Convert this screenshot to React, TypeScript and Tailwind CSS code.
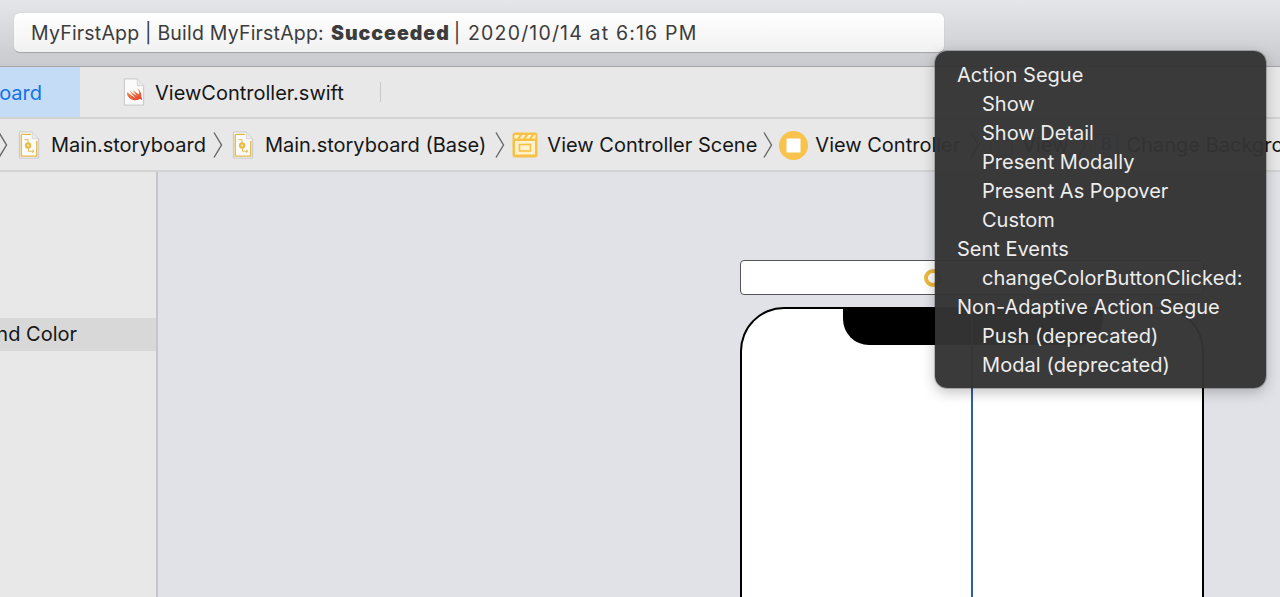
const font = { fontFamily: 'Inter, "Liberation Sans", sans-serif' };

function Chevron() {
  return (
    <svg width="10" height="28" viewBox="0 0 10 28" className="shrink-0" fill="none">
      <path d="M1 1.5 L8.5 14 L1 26.5" stroke="#666666" strokeWidth="1.4" />
    </svg>
  );
}

function DocBase({ children }: { children?: React.ReactNode }) {
  return (
    <svg width="22" height="28" viewBox="0 0 24 29" preserveAspectRatio="none" className="shrink-0" fill="none">
      <path d="M1.5 1 H15.5 L22.5 8 V28 H1.5 Z" fill="#fbfbfb" stroke="#c4c4c4" strokeWidth="1" />
      <path d="M15.5 1 V8 H22.5" fill="#e9e9e9" stroke="#d0d0d0" strokeWidth="0.8" />
      {children}
    </svg>
  );
}

function StoryboardIcon() {
  return (
    <DocBase>
      <path d="M3.5 3.5 H14 M3.5 3.5 V26 H20.5 V10" stroke="#e3b64a" strokeWidth="1.5" />
      <path d="M7 9 H11 V12 M11.5 18 V21 H17" stroke="#e3b64a" strokeWidth="1" />
      <circle cx="11" cy="15" r="3.4" fill="#e9bb45" />
      <circle cx="11" cy="15" r="1.1" fill="#fff3cf" />
      <path d="M15.5 19.5 L17.5 21 L15.5 22.5" stroke="#e3b64a" strokeWidth="1" />
    </DocBase>
  );
}

function SwiftIcon() {
  return (
    <DocBase>
      <defs>
        <linearGradient id="swiftGrad" x1="0.2" y1="0" x2="0.8" y2="1">
          <stop offset="0" stopColor="#f2984a" />
          <stop offset="1" stopColor="#e2402f" />
        </linearGradient>
      </defs>
      <path
        d="M4.5 14.5 C8 17.5 11.5 19.5 13.5 20.5 C10.5 17.5 8.5 15 6.5 12.5 C9.5 15 13 17.5 15 18.5 C13 16 11.5 14 10.5 12.5 C13.5 14.8 16.5 16.5 17.5 17 C18 14.5 17 12.5 15.5 11 C18.5 12.5 20.5 16 20 19.5 C20.7 20.7 20.8 22 20.5 23 C19.8 22 18.8 21.6 18 21.8 C15.5 23.5 11 23.5 8 21.5 C6.5 20.5 5.3 19 4.5 17.5 Z"
        fill="url(#swiftGrad)"
      />
    </DocBase>
  );
}

function SceneIcon() {
  return (
    <svg width="26" height="26" viewBox="0 0 26 26" className="shrink-0" fill="none">
      <rect x="0.5" y="0.5" width="25" height="25" rx="2.5" fill="#f8c145" />
      <path d="M2.5 3 H23.5 V6.5 H2.5 Z" fill="#fff2cd" />
      <path d="M5 7 L8 2.5 H10.5 L7.5 7 Z M11 7 L14 2.5 H16.5 L13.5 7 Z M17 7 L20 2.5 H22.5 L19.5 7 Z" fill="#f8c145" />
      <rect x="3" y="9" width="20" height="13.5" fill="#fff2cd" />
      <rect x="7.5" y="12.5" width="11" height="6.5" fill="#fff2cd" stroke="#f8c145" strokeWidth="1.6" />
    </svg>
  );
}

function ControllerIcon() {
  return (
    <svg width="29" height="29" viewBox="0 0 29 29" className="shrink-0">
      <circle cx="14.5" cy="14.5" r="14.5" fill="#f8c34c" />
      <rect x="7.5" y="7.5" width="14" height="14" rx="0.5" fill="#ffffff" />
    </svg>
  );
}

function ViewIcon() {
  return (
    <svg width="23" height="23" viewBox="0 0 23 23" className="shrink-0" fill="none">
      <rect x="1" y="1" width="21" height="21" fill="#f6f6f6" stroke="#9a9a9a" strokeWidth="1.2" />
      <path d="M8 1 V22 M15 1 V22" stroke="#9a9a9a" strokeWidth="1" />
    </svg>
  );
}

function ButtonIcon() {
  return (
    <div className="w-[23px] h-[23px] shrink-0 border border-[#9a9a9a] bg-[#f6f6f6] text-[#1273e6] text-[17px] font-semibold flex items-center justify-center">
      B
    </div>
  );
}

function Crumb({ icon, text, iconGap }: { icon: React.ReactNode; text: string; iconGap: string }) {
  return (
    <div className={`flex items-center shrink-0 ${iconGap}`}>
      {icon}
      <span>{text}</span>
    </div>
  );
}

const menu: { label: string; indent?: boolean; wide?: boolean }[] = [
  { label: "Action Segue" },
  { label: "Show", indent: true },
  { label: "Show Detail", indent: true },
  { label: "Present Modally", indent: true },
  { label: "Present As Popover", indent: true },
  { label: "Custom", indent: true },
  { label: "Sent Events" },
  { label: "changeColorButtonClicked:", indent: true, wide: true },
  { label: "Non-Adaptive Action Segue" },
  { label: "Push (deprecated)", indent: true, wide: true },
  { label: "Modal (deprecated)", indent: true, wide: true },
];

export default function App() {
  return (
    <div style={font} className="relative w-[1280px] h-[597px] overflow-hidden bg-[#e1e2e7] flex flex-col text-[20px] text-[#161616]">
      {/* Title bar */}
      <div className="h-[67px] shrink-0 border-b border-[#a6a6a6] bg-gradient-to-b from-[#e5e6e9] to-[#c9cacd] pt-[13px] pl-[14px]">
        <div className="w-[930px] h-[40px] rounded-[6px] bg-gradient-to-b from-[#ffffff] to-[#f1f1f1] border-b border-[#a9a9a9] flex items-center pl-[17px] pt-[2px] text-[#3c3c3c] text-[19.5px] whitespace-nowrap shadow-[0_0_1px_rgba(0,0,0,0.25)]">
          <span className="tracking-[0.2px]">MyFirstApp | Build MyFirstApp:</span>
          <b className="ml-[7px] font-black tracking-[1px]">Succeeded</b>
          <span className="ml-[4px] tracking-[1.17px]">| 2020/10/14 at 6:16 PM</span>
        </div>
      </div>

      {/* Tabs */}
      <div className="h-[52px] shrink-0 border-b-2 border-[#d3d3d3] bg-[#e8e8e8] flex items-stretch">
        <div className="w-[80px] bg-[#c5dcf6] text-[#1273e6] flex items-center justify-end whitespace-nowrap overflow-hidden pr-[38px] pt-[2px] shrink-0">
          <span className="shrink-0">oard</span>
        </div>
        <div className="flex items-center pl-[43px] gap-[10px]">
          <SwiftIcon />
          <span className="pt-[2px]">ViewController.swift</span>
          <span className="ml-[26px] w-[1px] h-[20px] bg-[#c9c9c9]" />
        </div>
      </div>

      {/* Jump bar */}
      <div className="h-[53px] shrink-0 border-b-2 border-[#d3d3d3] bg-[#e8e8e8] flex items-center whitespace-nowrap overflow-hidden pt-[1px]">
        <div className="ml-[-2px] mr-[10px]"><Chevron /></div>
        <Crumb icon={<StoryboardIcon />} text="Main.storyboard" iconGap="gap-[11px]" />
        <div className="ml-[7px] mr-[9px]"><Chevron /></div>
        <Crumb icon={<StoryboardIcon />} text="Main.storyboard (Base)" iconGap="gap-[11px]" />
        <div className="ml-[9px] mr-[7px]"><Chevron /></div>
        <Crumb icon={<SceneIcon />} text="View Controller Scene" iconGap="gap-[9px]" />
        <div className="mx-[6px]"><Chevron /></div>
        <Crumb icon={<ControllerIcon />} text="View Controller" iconGap="gap-[7px]" />
        <div className="ml-[10px] mr-[10px]"><Chevron /></div>
        <Crumb icon={<ViewIcon />} text="View" iconGap="gap-[9px]" />
        <div className="mx-[8px]"><Chevron /></div>
        <Crumb icon={<ButtonIcon />} text="Change Background Color" iconGap="gap-[9px]" />
      </div>

      {/* Body */}
      <div className="flex-1 flex min-h-0">
        <div className="w-[158px] shrink-0 border-r-2 border-[#c6c6c8] bg-[#e8e8e8] pt-[146px]">
          <div className="h-[33px] bg-[#d8d8d8] flex items-center justify-end pr-[79px] pb-[2px] whitespace-nowrap overflow-hidden">
            <span className="shrink-0">nd Color</span>
          </div>
        </div>
        <div className="flex-1 min-w-0 pl-[582px] pt-[88px] overflow-hidden">
          <div className="relative w-[464px] h-[35px] rounded-[4px] border border-[#555555] bg-white">
            <div className="absolute left-[183px] top-[8px] w-[18px] h-[18px] rounded-full border-[4px] border-[#ecb93f]" />
          </div>
          <div className="relative mt-[12px] w-[464px] h-[320px] rounded-t-[44px] border-x-2 border-t-2 border-black bg-white">
            <div className="absolute left-[101px] top-0 w-[260px] h-[36px] bg-black rounded-b-[26px]" />
            <div className="absolute left-[229px] top-0 h-full w-[2px] bg-[#2f5f9e]" />
          </div>
        </div>
      </div>

      {/* Popup menu */}
      <div className="absolute left-[935px] top-[51px] w-[331px] h-[337px] rounded-[12px] bg-[rgba(52,52,52,0.97)] ring-1 ring-black/20 shadow-[0_4px_14px_rgba(0,0,0,0.25)] pt-[9px] pl-[22px] text-[#ededed]">
        {menu.map((m) => (
          <div
            key={m.label}
            className={`h-[29px] flex items-center whitespace-nowrap ${m.indent ? "pl-[25px]" : ""} ${m.wide ? "tracking-[0.08px]" : ""}`}
          >
            {m.label}
          </div>
        ))}
      </div>
    </div>
  );
}
